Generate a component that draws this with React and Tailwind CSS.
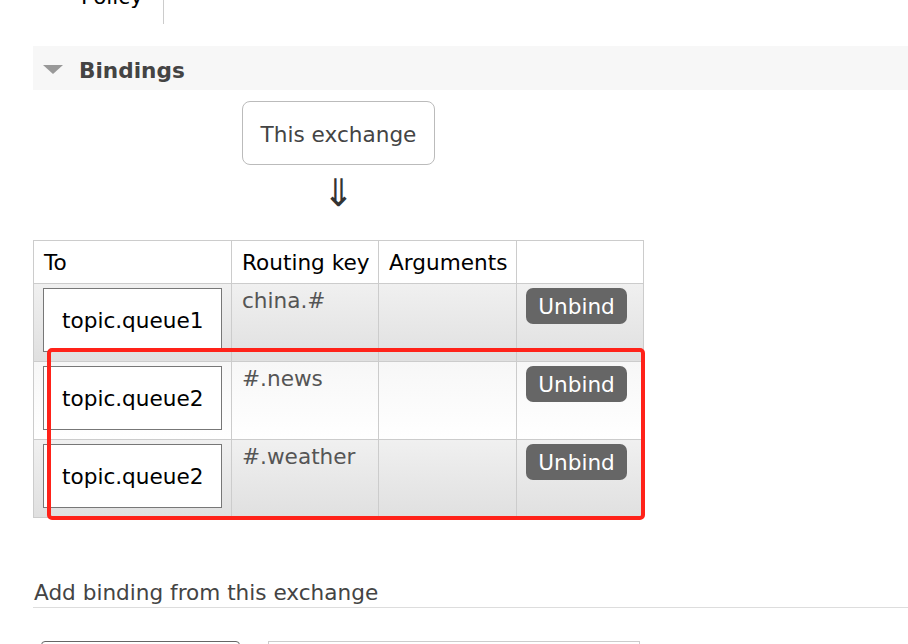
const rows = [
  { queue: "topic.queue1", key: "china.#", alt: false },
  { queue: "topic.queue2", key: "#.news", alt: true },
  { queue: "topic.queue2", key: "#.weather", alt: false },
];

const BindingRow = ({ queue, routingKey, alt }) => {
  const bg = alt
    ? "bg-linear-to-b from-[#f7f7f7] to-[#ffffff]"
    : "bg-linear-to-b from-[#f0f0f0] to-[#e0e0e0]";
  return (
    <>
      <div className={`h-[78px] border-r border-b border-[#cccccc] pl-[9px] pt-[4px] ${bg}`}>
        <div className="flex h-[64px] w-[179px] items-center border border-[#777777] bg-white pl-[18px] text-black">
          {queue}
        </div>
      </div>
      <div className={`h-[78px] border-r border-b border-[#cccccc] pl-[10px] pt-[4px] text-[#555555] ${bg}`}>
        {routingKey}
      </div>
      <div className={`h-[78px] border-r border-b border-[#cccccc] ${bg}`} />
      <div className={`h-[78px] border-r border-b border-[#cccccc] pl-[9px] pt-[4px] ${bg}`}>
        <button className="flex h-[36px] w-[101px] items-center justify-center rounded-[7px] bg-[#666666] text-white">
          Unbind
        </button>
      </div>
    </>
  );
};

const App = () => {
  return (
    <div
      className="min-h-screen overflow-hidden bg-white text-[21.6px] leading-[25px] text-[#444444]"
      style={{ fontFamily: '"DejaVu Sans", Verdana, sans-serif' }}
    >
      {/* clipped row of the table above */}
      <div className="h-[24px] overflow-hidden">
        <div className="-mt-[16px] w-[164px] border-r border-[#cccccc] pr-[20px] text-right text-black">
          <div className="h-[40px]">Policy</div>
        </div>
      </div>

      <div className="pl-[33px]">
        {/* section header */}
        <div className="mt-[22px] flex h-[44px] items-center bg-[#f7f7f7] pl-[10px]">
          <span className="mr-[16px] mt-[3px] h-0 w-0 border-x-[10px] border-t-[9px] border-x-transparent border-t-[#999999]" />
          <span className="mt-[4px] font-bold text-[#444444]">Bindings</span>
        </div>

        {/* source */}
        <div className="ml-[209px] mt-[11px] flex w-[193px] flex-col items-center">
          <div className="flex h-[64px] w-[193px] items-center justify-center rounded-[8px] border border-[#bbbbbb] pt-[2px] text-[#444444]">
            This exchange
          </div>
          <div className="mt-[8px] h-[40px] text-[38px] leading-[40px] text-[#333333]">⇓</div>
        </div>

        {/* bindings table */}
        <div className="relative mt-[27px] w-[611px]">
          <div className="grid grid-cols-[198px_147px_138px_127px] border-l border-t border-[#cccccc] text-black">
            <div className="flex h-[43px] items-center border-r border-b border-[#cccccc] pl-[10px]">To</div>
            <div className="flex h-[43px] items-center border-r border-b border-[#cccccc] pl-[10px]">Routing key</div>
            <div className="flex h-[43px] items-center border-r border-b border-[#cccccc] pl-[10px]">Arguments</div>
            <div className="h-[43px] border-r border-b border-[#cccccc]" />
            {rows.map((r, i) => (
              <BindingRow key={i} queue={r.queue} routingKey={r.key} alt={r.alt} />
            ))}
          </div>
          {/* annotation */}
          <div className="pointer-events-none absolute left-[14px] top-[108px] h-[172px] w-[598px] rounded-[5px] border-[4px] border-[#ff2219]" />
        </div>

        {/* add binding */}
        <div className="mt-[62px] border-b border-[#dddddd] pb-[2px] pl-[1px] text-[#444444]">
          Add binding from this exchange
        </div>
        <div className="mt-[33px] flex gap-[28px] pl-[8px]">
          <div className="h-[30px] w-[199px] rounded-t-[4px] border border-[#666666]" />
          <div className="h-[30px] w-[372px] border border-[#cccccc]" />
        </div>
      </div>
    </div>
  );
};

export default App;
